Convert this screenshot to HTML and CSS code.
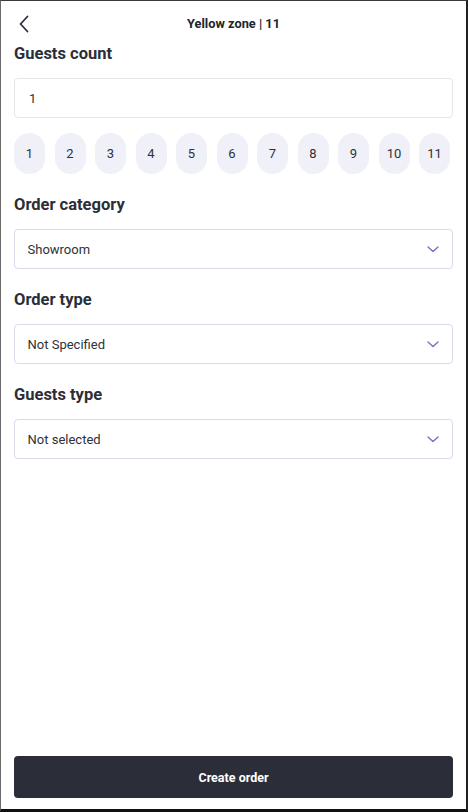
FILE: index.html
```html
<!DOCTYPE html>
<html>
<head>
<meta charset="utf-8">
<link rel="stylesheet" href="styles.css">
</head>
<body>
<div class="screen">
  <header class="topbar">
    <button class="back" aria-label="Back">
      <svg width="12" height="18" viewBox="0 0 12 18"><path d="M9.5 1.5 L2.5 9 L9.5 16.5" fill="none" stroke="#2b2e38" stroke-width="1.8" stroke-linecap="round" stroke-linejoin="round"/></svg>
    </button>
    <div class="title">Yellow zone | 11</div>
  </header>

  <main class="form">
    <section class="field">
      <h2 class="label">Guests count</h2>
      <div class="input">1</div>
      <div class="chips">
        <span class="chip">1</span><span class="chip">2</span><span class="chip">3</span><span class="chip">4</span><span class="chip">5</span><span class="chip">6</span><span class="chip">7</span><span class="chip">8</span><span class="chip">9</span><span class="chip">10</span><span class="chip">11</span>
      </div>
    </section>

    <section class="field">
      <h2 class="label">Order category</h2>
      <div class="select"><span>Showroom</span>
        <svg class="caret" width="12" height="7" viewBox="0 0 12 7"><path d="M1 1 L6 5.5 L11 1" fill="none" stroke="#7d72c6" stroke-width="1.5" stroke-linecap="round" stroke-linejoin="round"/></svg>
      </div>
    </section>

    <section class="field">
      <h2 class="label">Order type</h2>
      <div class="select"><span>Not Specified</span>
        <svg class="caret" width="12" height="7" viewBox="0 0 12 7"><path d="M1 1 L6 5.5 L11 1" fill="none" stroke="#7d72c6" stroke-width="1.5" stroke-linecap="round" stroke-linejoin="round"/></svg>
      </div>
    </section>

    <section class="field">
      <h2 class="label">Guests type</h2>
      <div class="select"><span>Not selected</span>
        <svg class="caret" width="12" height="7" viewBox="0 0 12 7"><path d="M1 1 L6 5.5 L11 1" fill="none" stroke="#7d72c6" stroke-width="1.5" stroke-linecap="round" stroke-linejoin="round"/></svg>
      </div>
    </section>
  </main>

  <footer class="actions">
    <button class="primary">Create order</button>
  </footer>
</div>
</body>
</html>
```
FILE: styles.css
```css
* { box-sizing: border-box; }
html, body { margin: 0; padding: 0; background: #fff; }
body { font-family: Roboto, "Liberation Sans", Arial, sans-serif; color: #2b2e38; }

.screen {
  width: 468px;
  height: 812px;
  display: flex;
  flex-direction: column;
  border-left: 1px solid #6a6a6a;
  border-top: 1px solid #3a3a3a;
  border-right: 2px solid #222;
  border-bottom: 3px solid #111;
  padding: 0 13px;
  background: #fff;
}

.topbar {
  height: 43px;
  display: flex;
  align-items: center;
  justify-content: center;
  position: relative;
}
.back {
  position: absolute;
  left: 4px;
  top: 13px;
  width: 14px;
  height: 20px;
  padding: 0;
  border: 0;
  background: none;
  display: flex;
  align-items: center;
}
.title {
  font-size: 12.8px;
  font-weight: 700;
  color: #22252c;
  margin-top: 1px;
}

.form { flex: 1; display: flex; flex-direction: column; }
.field { display: flex; flex-direction: column; }
.field + .field { margin-top: 21px; }

.label {
  margin: 0 0 14px;
  font-size: 16.5px;
  line-height: 20px;
  font-weight: 700;
  color: #2b2e38;
}

.input, .select {
  border-radius: 4px;
  display: flex;
  align-items: center;
  font-size: 13px;
  color: #2f3139;
}
.input {
  height: 40px;
  border: 1px solid #e6e6ea;
  padding: 0 14px;
}
.select {
  height: 40px;
  border: 1.5px solid #dcd9ea;
  justify-content: space-between;
  padding: 0 13px 0 12.5px;
}
.caret { display: block; }

.chips {
  display: flex;
  gap: 9.5px;
  margin-top: 15px;
}
.chip {
  width: 31px;
  height: 41px;
  border-radius: 16px;
  background: #f0f0f8;
  display: flex;
  align-items: center;
  justify-content: center;
  font-size: 13px;
  color: #2f3139;
}

.actions { padding-bottom: 11px; }
.primary {
  width: 100%;
  height: 42px;
  border: 0;
  border-radius: 4px;
  background: #2b2e38;
  color: #fff;
  font-family: Roboto, "Liberation Sans", Arial, sans-serif;
  font-size: 12.5px;
  font-weight: 700;
}
```
